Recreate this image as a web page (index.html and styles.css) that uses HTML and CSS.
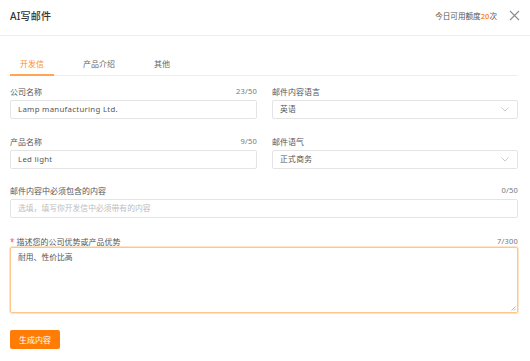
FILE: index.html
```html
<!DOCTYPE html>
<html lang="zh">
<head>
<meta charset="utf-8">
<link rel="stylesheet" href="styles.css">
</head>
<body>
<div class="dialog">
  <header class="head">
    <div class="title">AI写邮件</div>
    <div class="head-right">
      <span class="quota">今日可用额度<b>20</b>次</span>
      <svg class="close" width="11" height="11" viewBox="0 0 11 11"><path d="M1 1L10 10M10 1L1 10" stroke="#8c8c8c" stroke-width="1.1" fill="none"/></svg>
    </div>
  </header>
  <div class="body">
    <nav class="tabs">
      <div class="tab active">开发信</div>
      <div class="tab">产品介绍</div>
      <div class="tab">其他</div>
    </nav>
    <div class="grid">
      <div class="field">
        <div class="label"><span>公司名称</span><span class="count">23/50</span></div>
        <div class="input">Lamp manufacturing Ltd.</div>
      </div>
      <div class="field">
        <div class="label"><span>邮件内容语言</span></div>
        <div class="input select"><span>英语</span><svg width="8" height="5" viewBox="0 0 8 5"><path d="M0.5 0.5L4 4L7.5 0.5" stroke="#c4c4c4" stroke-width="0.9" fill="none"/></svg></div>
      </div>
      <div class="field">
        <div class="label"><span>产品名称</span><span class="count">9/50</span></div>
        <div class="input">Led light</div>
      </div>
      <div class="field">
        <div class="label"><span>邮件语气</span></div>
        <div class="input select"><span>正式商务</span><svg width="8" height="5" viewBox="0 0 8 5"><path d="M0.5 0.5L4 4L7.5 0.5" stroke="#c4c4c4" stroke-width="0.9" fill="none"/></svg></div>
      </div>
      <div class="field wide row3">
        <div class="label"><span>邮件内容中必须包含的内容</span><span class="count">0/50</span></div>
        <div class="input placeholder">选填，填写你开发信中必须带有的内容</div>
      </div>
      <div class="field wide tight">
        <div class="label"><span><i class="req">*</i> 描述您的公司优势或产品优势</span><span class="count">7/300</span></div>
        <div class="textarea">耐用、性价比高<svg class="grip" width="6" height="6" viewBox="0 0 6 6"><path d="M5.5 1.5L1.5 5.5M5.5 3.8L3.8 5.5" stroke="#999" stroke-width="0.7"/></svg></div>
      </div>
    </div>
    <button class="btn">生成内容</button>
  </div>
</div>
</body>
</html>
```

FILE: styles.css
```css
* { box-sizing: border-box; }
html, body { margin: 0; padding: 0; background: #fff; }
body {
  font-family: "Noto Sans", "Noto Sans CJK SC", sans-serif;
  color: #555;
  width: 530px;
  height: 361px;
  overflow: hidden;
}
.head {
  height: 36px;
  border-bottom: 1px solid #eeeeee;
  display: flex;
  align-items: center;
  justify-content: space-between;
  padding: 0 10px 4px 10px;
}
.title {
  font-size: 10px;
  font-weight: 500;
  color: #333;
  letter-spacing: 0.2px;
}
.head-right { display: flex; align-items: center; gap: 12px; }
.quota { font-size: 7.6px; color: #555; }
.quota b { color: #ff8a1f; font-weight: 600; }
.close { display: block; margin-top: -1px; }
.body { padding: 20px 12px 0 10px; }
.tabs {
  display: flex;
  gap: 19px;
  border-bottom: 1px solid #eeeeee;
}
.tab {
  font-size: 8px;
  line-height: 14px;
  padding: 1px 10px 3px;
  color: #666;
  border-bottom: 2px solid transparent;
  margin-bottom: -1px;
}
.tab.active {
  color: #ff8a1f;
  border-bottom-color: #ffa555;
}
.grid {
  display: grid;
  grid-template-columns: 247px 246px;
  column-gap: 15px;
  row-gap: 16px;
  margin-top: 9px;
}
.field.wide { grid-column: 1 / -1; }
.field.row3 { margin-top: -1px; }
.field.tight { margin-top: 2px; }
.label {
  display: flex;
  justify-content: space-between;
  font-size: 8px;
  line-height: 13px;
  color: #555;
  margin-bottom: 2px;
}
.count { font-size: 7.5px; color: #777; letter-spacing: 0.2px; }
.req { font-style: normal; color: #f5574a; }
.tight .label { margin-bottom: 0; line-height: 11px; }
.input {
  height: 19px;
  border: 1px solid #e4e4e4;
  border-radius: 2px;
  padding: 0 7px;
  font-size: 7.8px;
  line-height: 17px;
  color: #555;
  letter-spacing: 0.3px;
  display: flex;
  align-items: center;
  justify-content: space-between;
}
.input.placeholder { color: #bdbdbd; letter-spacing: 0; }
.select svg { display: block; margin-right: 1px; }
.textarea {
  position: relative;
  height: 66px;
  border: 1px solid #ffc58a;
  box-shadow: 0 0 0 1px #ffe3c6;
  border-radius: 2px;
  padding: 3px 7px;
  font-size: 7.8px;
  line-height: 12px;
  color: #555;
}
.grip { position: absolute; right: 1px; bottom: 1px; }
.btn {
  margin-top: 17px;
  border: 0;
  border-radius: 2px;
  background: #ff7d06;
  color: #fff;
  font-family: "Noto Sans CJK SC", sans-serif;
  font-size: 8px;
  height: 19px;
  width: 50px;
  padding: 0;
}
```
